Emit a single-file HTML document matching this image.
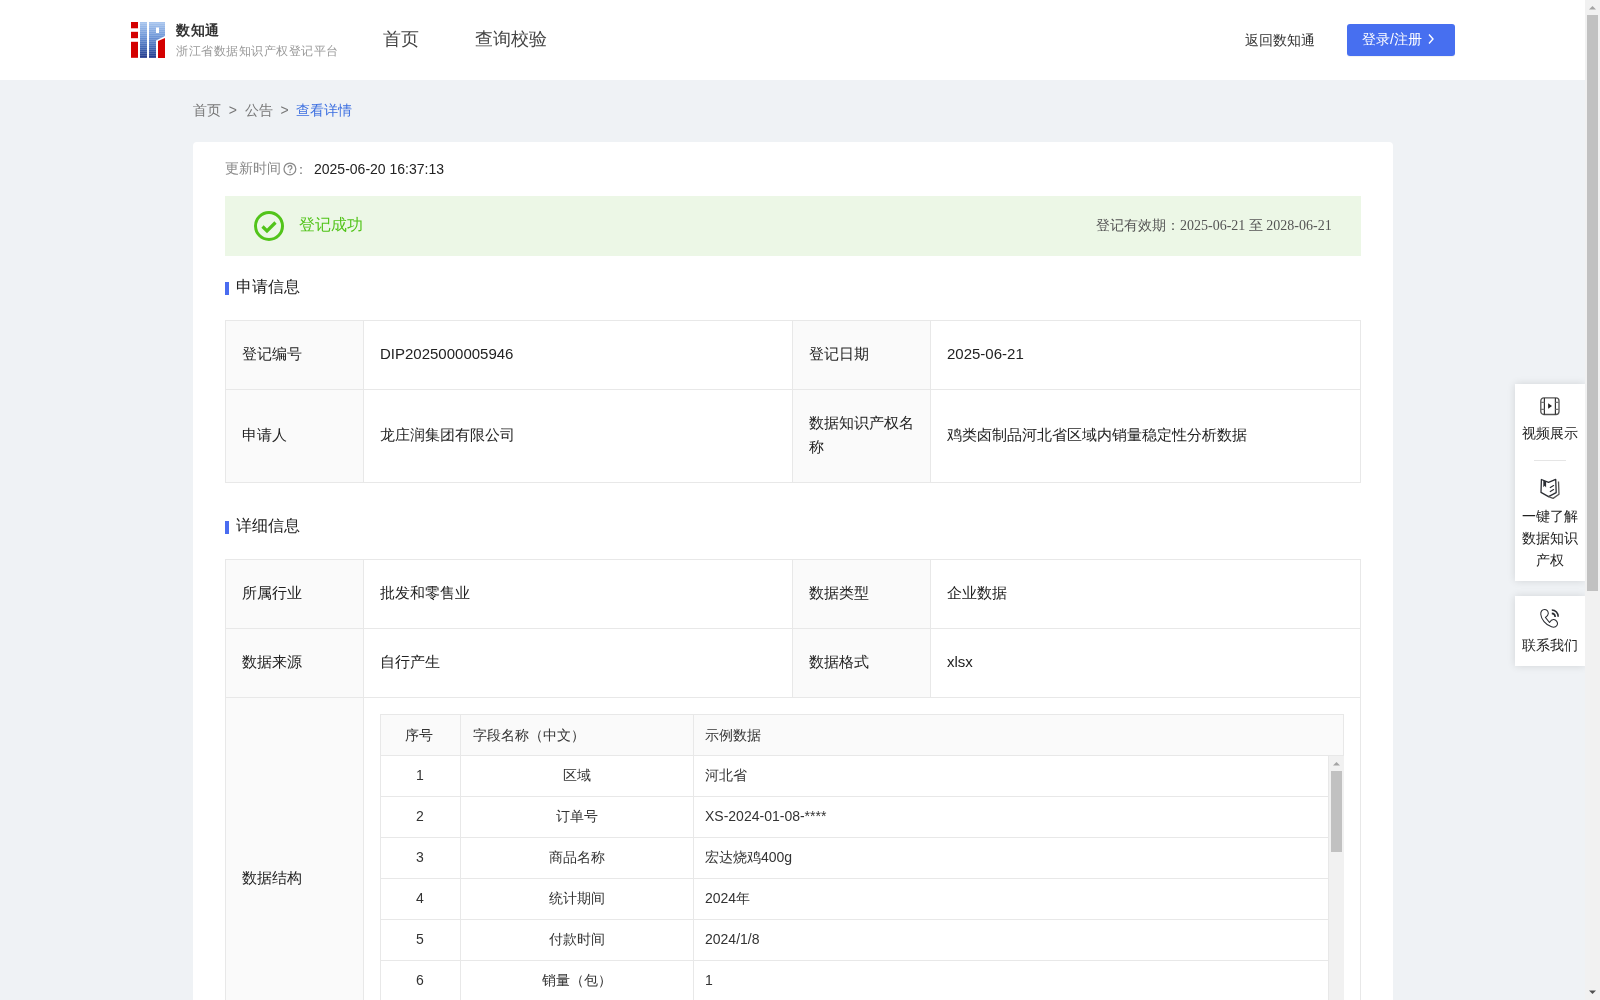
<!DOCTYPE html>
<html><head><meta charset="utf-8">
<style>
*{box-sizing:border-box;margin:0;padding:0}
html,body{width:1600px;height:1000px;overflow:hidden}
body{font-family:"Liberation Sans",sans-serif;background:#eff2f5;position:relative;color:#333}
.abs{position:absolute}
#hdr{position:absolute;left:0;top:0;width:1585px;height:80px;background:#fff}
.t{position:absolute;white-space:nowrap;line-height:1;will-change:transform}
#card{position:absolute;left:193px;top:142px;width:1200px;height:900px;background:#fff;border-radius:4px}
table.kv{position:absolute;border-collapse:collapse;table-layout:fixed;will-change:transform}
table.kv td{border:1px solid #e8e8e8;font-size:15px;color:#222;padding:0 16px 2px;vertical-align:middle;line-height:24px}
table.kv td.l{background:#fafafa}
.sec{position:absolute;font-size:16px;color:#222;line-height:1;will-change:transform}
.sec:before{content:"";position:absolute;left:-11px;top:3px;width:4px;height:13px;background:#4a6cf0}
#sb{position:absolute;left:1585px;top:0;width:15px;height:1000px;background:#f1f1f1}
</style></head>
<body>
<div id="hdr">
  <svg class="abs" style="left:131px;top:22px" width="34" height="36" viewBox="0 0 34 36">
    <defs>
      <linearGradient id="bg" x1="0" y1="0" x2="0" y2="1">
        <stop offset="0" stop-color="#a9c6ee"/>
        <stop offset="0.4" stop-color="#6f97d8"/>
        <stop offset="0.75" stop-color="#3f63b0"/>
        <stop offset="1" stop-color="#22378a"/>
      </linearGradient>
      <linearGradient id="fade" x1="0" y1="0" x2="0" y2="1">
        <stop offset="0" stop-color="#fff" stop-opacity=".55"/>
        <stop offset=".7" stop-color="#fff" stop-opacity=".15"/>
        <stop offset="1" stop-color="#fff" stop-opacity="0"/>
      </linearGradient>
      <pattern id="stripe" width="34" height="2" patternUnits="userSpaceOnUse"><rect x="0" y="1" width="34" height="1" fill="url(#fade)"/></pattern>
      <clipPath id="blue"><rect x="9" y="0" width="7" height="36"/><path d="M18 0H34V14L25 18.5V36H18Z"/></clipPath>
    </defs>
    <rect x="0" y="0" width="7" height="6.3" fill="#d40000"/>
    <rect x="0" y="9.8" width="7" height="6.4" fill="#d40000"/>
    <rect x="0" y="19.8" width="7" height="16" fill="#d40000"/>
    <rect x="9" y="0" width="7" height="36" fill="url(#bg)"/>
    <path d="M18 0H34V14L25 18.5V36H18Z M25 5.5V11H28V5.5Z" fill="url(#bg)" fill-rule="evenodd"/>
    <g clip-path="url(#blue)"><rect x="0" y="0" width="34" height="36" fill="url(#stripe)" opacity=".6"/></g>
    <path d="M27 19L34 16V36H27Z" fill="#d40000"/>
  </svg>
  <div class="t" style="left:176px;top:23px;font-size:14px;font-weight:bold;color:#333;letter-spacing:.6px">数知通</div>
  <div class="t" style="left:176px;top:45px;font-size:12px;letter-spacing:.5px;color:#999">浙江省数据知识产权登记平台</div>
  <div class="t" style="left:383px;top:30px;font-size:18px;color:#444">首页</div>
  <div class="t" style="left:475px;top:30px;font-size:18px;color:#444">查询校验</div>
  <div class="t" style="left:1245px;top:33px;font-size:14px;color:#333">返回数知通</div>
  <div class="abs" style="left:1347px;top:24px;width:108px;height:32px;background:#476ff0;border-radius:3px;box-shadow:0 1px 1px rgba(0,0,0,.06)"></div>
  <div class="t" style="left:1362px;top:32px;font-size:14px;color:#fff">登录/注册</div>
  <svg class="abs" style="left:1427px;top:33px" width="8" height="12" viewBox="0 0 8 12"><path d="M2 1.5L6 6L2 10.5" stroke="#fff" stroke-width="1.4" fill="none"/></svg>
</div>

<div class="t" style="left:193px;top:103px;font-size:14px;color:#777">首页&nbsp;&nbsp;&gt;&nbsp;&nbsp;公告&nbsp;&nbsp;&gt;&nbsp;&nbsp;<span style="color:#3c6fe0">查看详情</span></div>

<div id="card">
  <div class="t" style="left:32px;top:19px;font-size:14px;color:#888">更新时间</div>
  <svg class="abs" style="left:90px;top:20px" width="14" height="14" viewBox="0 0 14 14"><circle cx="6.9" cy="6.9" r="5.9" stroke="#8a8a8a" stroke-width="1.25" fill="none"/><path d="M5.1 5.5a1.9 1.9 0 1 1 2.6 1.7c-.5.3-.7.6-.7 1.3" stroke="#8a8a8a" stroke-width="1.3" fill="none"/><circle cx="7" cy="10.2" r=".8" fill="#8a8a8a"/></svg>
  <div class="t" style="left:101px;top:20px;font-size:14px;color:#888">：</div>
  <div class="t" style="left:121px;top:20px;font-size:14px;color:#222">2025-06-20 16:37:13</div>

  <div class="abs" style="left:32px;top:54px;width:1136px;height:60px;background:#ecf7e6"></div>
  <svg class="abs" style="left:61px;top:69px" width="30" height="30" viewBox="0 0 30 30"><circle cx="15" cy="15" r="13.5" stroke="#52c41a" stroke-width="3" fill="none"/><path d="M8.5 15.5L13 20L21.5 11.5" stroke="#52c41a" stroke-width="3.2" fill="none"/></svg>
  <div class="t" style="left:106px;top:75px;font-size:16px;color:#52c41a">登记成功</div>
  <div class="t" style="right:61px;top:77px;font-size:14px;color:#555;font-family:'Liberation Serif',serif">登记有效期：2025-06-21 至 2028-06-21</div>

  <div class="sec" style="left:43px;top:137px">申请信息</div>
  <table class="kv" style="left:32px;top:178px;width:1135px">
    <colgroup><col style="width:138px"><col style="width:429px"><col style="width:138px"><col style="width:430px"></colgroup>
    <tr style="height:69px"><td class="l">登记编号</td><td>DIP2025000005946</td><td class="l">登记日期</td><td>2025-06-21</td></tr>
    <tr style="height:93px"><td class="l">申请人</td><td>龙庄润集团有限公司</td><td class="l">数据知识产权名称</td><td>鸡类卤制品河北省区域内销量稳定性分析数据</td></tr>
  </table>

  <div class="sec" style="left:43px;top:376px">详细信息</div>
  <table class="kv" style="left:32px;top:417px;width:1135px">
    <colgroup><col style="width:138px"><col style="width:429px"><col style="width:138px"><col style="width:430px"></colgroup>
    <tr style="height:69px"><td class="l">所属行业</td><td>批发和零售业</td><td class="l">数据类型</td><td>企业数据</td></tr>
    <tr style="height:69px"><td class="l">数据来源</td><td>自行产生</td><td class="l">数据格式</td><td>xlsx</td></tr>
    <tr style="height:362px"><td class="l">数据结构</td><td colspan="3" style="position:relative;vertical-align:top;padding:0"></td></tr>
  </table>
</div>

<div id="inner" style="position:absolute;left:380px;top:714px;width:964px;height:400px">
  <div class="abs" style="left:0;top:0;width:964px;height:42px;background:#fafafa;border:1px solid #e8e8e8"></div>
  <div class="abs" style="left:80px;top:0;width:1px;height:400px;background:#e8e8e8"></div>
  <div class="abs" style="left:313px;top:0;width:1px;height:400px;background:#e8e8e8"></div>
  <div class="abs" style="left:0;top:0;width:1px;height:400px;background:#e8e8e8"></div>
  <div class="abs" style="left:948px;top:41px;width:1px;height:400px;background:#e8e8e8"></div>
  <div class="t" style="left:25px;top:14px;font-size:14px">序号</div>
  <div class="t" style="left:93px;top:14px;font-size:14px">字段名称（中文）</div>
  <div class="t" style="left:325px;top:14px;font-size:14px">示例数据</div>
  <div class="abs" style="left:0;top:82px;width:949px;height:1px;background:#e8e8e8"></div>
<div class="t" style="left:0;width:80px;text-align:center;top:54px;font-size:14px">1</div>
<div class="t" style="left:81px;width:232px;text-align:center;top:54px;font-size:14px">区域</div>
<div class="t" style="left:325px;top:54px;font-size:14px">河北省</div>
<div class="abs" style="left:0;top:123px;width:949px;height:1px;background:#e8e8e8"></div>
<div class="t" style="left:0;width:80px;text-align:center;top:95px;font-size:14px">2</div>
<div class="t" style="left:81px;width:232px;text-align:center;top:95px;font-size:14px">订单号</div>
<div class="t" style="left:325px;top:95px;font-size:14px">XS-2024-01-08-****</div>
<div class="abs" style="left:0;top:164px;width:949px;height:1px;background:#e8e8e8"></div>
<div class="t" style="left:0;width:80px;text-align:center;top:136px;font-size:14px">3</div>
<div class="t" style="left:81px;width:232px;text-align:center;top:136px;font-size:14px">商品名称</div>
<div class="t" style="left:325px;top:136px;font-size:14px">宏达烧鸡400g</div>
<div class="abs" style="left:0;top:205px;width:949px;height:1px;background:#e8e8e8"></div>
<div class="t" style="left:0;width:80px;text-align:center;top:177px;font-size:14px">4</div>
<div class="t" style="left:81px;width:232px;text-align:center;top:177px;font-size:14px">统计期间</div>
<div class="t" style="left:325px;top:177px;font-size:14px">2024年</div>
<div class="abs" style="left:0;top:246px;width:949px;height:1px;background:#e8e8e8"></div>
<div class="t" style="left:0;width:80px;text-align:center;top:218px;font-size:14px">5</div>
<div class="t" style="left:81px;width:232px;text-align:center;top:218px;font-size:14px">付款时间</div>
<div class="t" style="left:325px;top:218px;font-size:14px">2024/1/8</div>
<div class="abs" style="left:0;top:287px;width:949px;height:1px;background:#e8e8e8"></div>
<div class="t" style="left:0;width:80px;text-align:center;top:259px;font-size:14px">6</div>
<div class="t" style="left:81px;width:232px;text-align:center;top:259px;font-size:14px">销量（包）</div>
<div class="t" style="left:325px;top:259px;font-size:14px">1</div>
<div class="abs" style="left:0;top:328px;width:949px;height:1px;background:#e8e8e8"></div>
<div class="t" style="left:0;width:80px;text-align:center;top:300px;font-size:14px">7</div>
<div class="t" style="left:81px;width:232px;text-align:center;top:300px;font-size:14px">销售额</div>
<div class="t" style="left:325px;top:300px;font-size:14px">30</div>

  <div class="abs" style="left:949px;top:42px;width:15px;height:400px;background:#f1f1f1"></div>
  <svg class="abs" style="left:949px;top:42px" width="15" height="15" viewBox="0 0 15 15"><path d="M4 9.5L7.5 6L11 9.5Z" fill="#a3a3a3"/></svg>
  <div class="abs" style="left:951px;top:57px;width:11px;height:81px;background:#c1c1c1"></div>
</div>

<div class="abs" style="left:1515px;top:384px;width:70px;height:197px;background:#fff;box-shadow:0 0 8px rgba(0,0,0,.12)"></div>
<div class="abs" style="left:1515px;top:596px;width:70px;height:70px;background:#fff;box-shadow:0 0 8px rgba(0,0,0,.12)"></div>
<svg class="abs" style="left:1539px;top:396px" width="22" height="20" viewBox="0 0 22 20">
  <rect x="1.8" y="1.9" width="18.2" height="16.6" rx="3" stroke="#555" stroke-width="1.3" fill="none"/>
  <path d="M5.4 1.9V18.5M16.4 1.9V18.5" stroke="#333" stroke-width="1.2"/>
  <path d="M1.8 6.3H5.4M1.8 13.4H5.4M16.4 6.3H20M16.4 13.4H20" stroke="#777" stroke-width="1.2"/>
  <path d="M9.1 7.2L13 9.9L9.1 12.8Z" fill="#222"/>
</svg>
<div class="t" style="left:1522px;top:426px;font-size:14px;color:#222">视频展示</div>
<div class="abs" style="left:1534px;top:460px;width:32px;height:1px;background:#e5e5e5"></div>
<svg class="abs" style="left:1539px;top:477px" width="22" height="24" viewBox="0 0 22 24">
  <path d="M2.4 2.5L2 15.4L9.5 19.6L17.2 15.6L16.7 2.3L9.5 5.4Z" stroke="#2a2d33" stroke-width="1.3" fill="none" stroke-linejoin="round"/>
  <path d="M19.5 4.5L20 17.2L14.1 21.4L9.5 19.6" stroke="#555" stroke-width="1.3" fill="none" stroke-linejoin="round"/>
  <path d="M4.3 3.3L7.1 4.5V10.4L5.7 8.8L4.3 10.2Z" fill="#2a2d33"/>
  <path d="M11.3 10.5L14.6 8.6M11.3 14.5L14.6 12.6" stroke="#2a2d33" stroke-width="1.2" stroke-linecap="round"/>
</svg>
<div class="t" style="left:1522px;top:509px;font-size:14px;color:#222;line-height:22px;white-space:normal;width:56px;text-align:center;top:505px">一键了解数据知识产权</div>
<svg class="abs" style="left:1539px;top:607px" width="22" height="22" viewBox="0 0 22 22">
  <path d="M5.5 2.5C3 2.5 1.5 4.5 1.8 7.5C2.2 12 6.5 18 12.5 19.8C15.5 20.8 18.2 19.5 18.5 17C18.7 15 17 12.8 14.8 12.5C13 12.3 11.5 13.8 10.5 15.5L6.4 10.4C7.8 9.5 9.3 8.5 9.3 6.5C9.3 4 7.8 2.5 5.5 2.5Z" stroke="#2a2d33" stroke-width="1.05" fill="none" stroke-linejoin="round"/>
  <path d="M12.8 3A6.5 6.5 0 0 1 19.2 9.8M12.8 6.4A3.6 3.6 0 0 1 16.2 9.9" stroke="#2a2d33" stroke-width="1.6" fill="none"/>
</svg>
<div class="t" style="left:1522px;top:638px;font-size:14px;color:#222">联系我们</div>

<div id="sb"></div>
<svg class="abs" style="left:1585px;top:0" width="15" height="15" viewBox="0 0 15 15"><path d="M4 9.5L7.5 6L11 9.5Z" fill="#a3a3a3"/></svg>
<div class="abs" style="left:1587px;top:15px;width:11px;height:576px;background:#c1c1c1"></div>
<svg class="abs" style="left:1585px;top:985px" width="15" height="15" viewBox="0 0 15 15"><path d="M4 5.5L7.5 9L11 5.5Z" fill="#505050"/></svg>
</body></html>
